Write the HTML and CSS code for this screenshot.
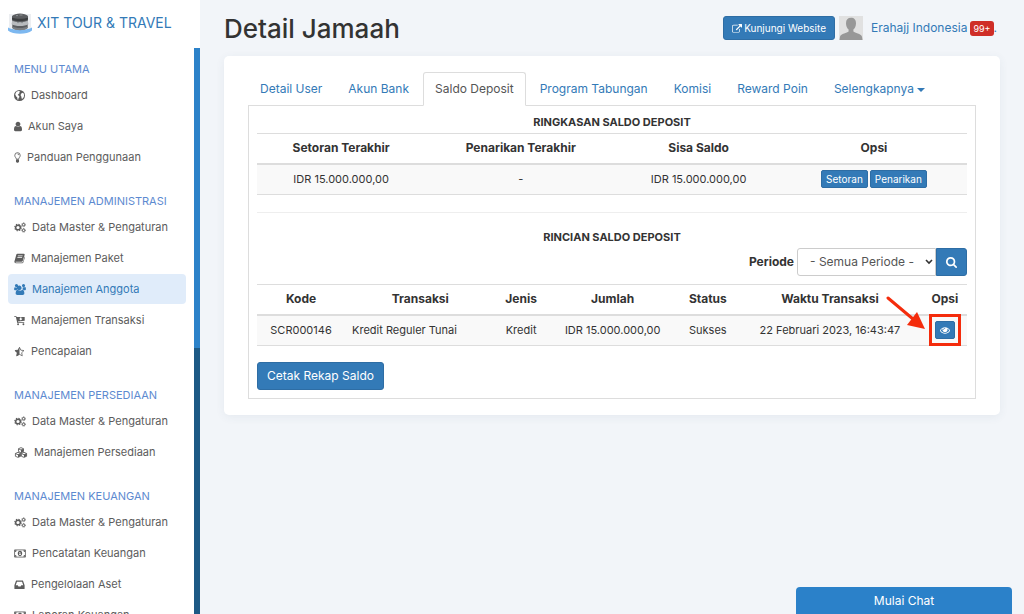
FILE: index.html
```html
<!DOCTYPE html>
<html lang="id">
<head>
<meta charset="utf-8">
<meta name="viewport" content="width=device-width, initial-scale=1">
<title>Detail Jamaah</title>
<link rel="stylesheet" href="styles.css">
</head>
<body>
<svg class="defs" aria-hidden="true">
  <symbol id="globe" viewBox="1 1 12 12"><path fill-rule="evenodd" d="M7 1a6 6 0 1 0 0 12A6 6 0 0 0 7 1zM3.600 3 5.800 2.200 7.600 2.400 6.700 3.700 7.200 4.400 5.900 5.300 5 6.500 6.400 7.200 7 8.500 6 9.800 5.600 11.600 4.800 11.300 4.600 9.200 3.200 7.800 2.300 5.600zM9.600 4.300l1.500-.3.900 2.200-.3 2.300-1.500 2-.9-.3-.2-1.900-.9-1.500.4-1.500z"/></symbol>
  <symbol id="user" viewBox="256 128 1280 1536"><path d="M1536 1399q0 109-62.500 187t-150.500 78h-854q-88 0-150.500-78t-62.500-187q0-85 8.500-160.500t31.500-152 58.500-131 94-89 134.500-34.500q131 128 313 128t313-128q76 0 134.500 34.500t94 89 58.500 131 31.500 152 8.500 160.500zm-256-887q0 159-112.500 271.500t-271.500 112.500-271.500-112.500-112.500-271.500 112.500-271.500 271.500-112.500 271.500 112.500 112.500 271.500z"/></symbol>
  <symbol id="bulb" viewBox="0 0 8 13"><path fill="none" stroke="currentColor" d="M2.700 8.500C2.500 6.800.8 6 .8 4a3.200 3.200 0 0 1 6.400 0c0 2-1.700 2.800-1.900 4.500zM4 2.300c1 0 1.600.6 1.600 1.400"/><path d="M2.200 9h3.600v2.600l-1.100 1H3.300l-1.100-1z"/></symbol>
  <symbol id="cogs" viewBox="0 0 15 13"><circle cx="5" cy="6.500" r="2.900" fill="none" stroke="currentColor" stroke-width="1.800"/><circle cx="5" cy="6.500" r="4.100" fill="none" stroke="currentColor" stroke-width="1.300" stroke-dasharray="1.700 1.520"/><g fill="none" stroke="currentColor"><circle cx="12" cy="3" r="1.500" stroke-width="1.200"/><circle cx="12" cy="3" r="2.300" stroke-dasharray="1.100 .706"/><circle cx="12" cy="10" r="1.500" stroke-width="1.200"/><circle cx="12" cy="10" r="2.300" stroke-dasharray="1.100 .706"/></g></symbol>
  <symbol id="book" viewBox="0 1 14 12"><path fill-rule="evenodd" d="M4.300 1h8.200c.9 0 1.300.6 1 1.400l-2.400 7.800c-.2.700-.7 1-1.400 1H2.600c-.9 0-.9.700-.2.800h7.900c.7 0 1-.2 1.200-.8l2-6.700c.4.400.5.800.3 1.300L12 11.900c-.3.700-.8 1.100-1.500 1.100H2.400C1 13 .2 11.800.6 10.600L3 2c.2-.600.600-1 1.300-1zm.7 2.200-.2.800h6l.2-.8zm-.6 2-.2.800h6l.2-.8z"/></symbol>
  <symbol id="users" viewBox="64 0 1920 1792"><path d="M657 896q-162 5-265 128h-134q-82 0-138-40.500t-56-118.500q0-353 124-353 6 0 43.500 21t97.500 42.500 119 21.500q67 0 133-23-5 37-5 66 0 159 90 294zm1071 637q0 120-73 189.500t-194 69.500h-874q-121 0-194-69.500t-73-189.500q0-53 3.500-103.500t14-109 26.500-108.500 43-97.500 62-81 85.500-53.500 111.500-20q10 0 43 21.500t73 48 107 48 135 21.500 135-21.500 107-48 73-48 43-21.500q61 0 111.500 20t85.500 53.500 62 81 43 97.500 26.500 108.500 14 109 3.500 103.500zm-1024-1277q0 106-75 181t-181 75-181-75-75-181 75-181 181-75 181 75 75 181zm576 384q0 159-112.500 271.500t-271.500 112.500-271.500-112.500-112.500-271.500 112.500-271.500 271.500-112.500 271.500 112.500 112.500 271.500zm704 225q0 78-56 118.500t-138 40.500h-134q-103-123-265-128 90-135 90-294 0-29-5-66 66 23 133 23 59 0 119-21.500t97.500-42.500 43.500-21q124 0 124 353zm-128-609q0 106-75 181t-181 75-181-75-75-181 75-181 181-75 181 75 75 181z"/></symbol>
  <symbol id="cart" viewBox="0 1 14 12"><path fill-rule="evenodd" d="M.3 1.300h2.500l.5 1.200h10.300v4.700L5 8.300l.2.900H13v1H4.200L2.300 2.300h-2zM7.700 3.300v1.400H6.300L8.600 7l2.300-2.300H9.500V3.300z"/><circle cx="5.200" cy="11.700" r="1.200"/><circle cx="12" cy="11.700" r="1.200"/></symbol>
  <symbol id="star" viewBox="0 0 14 13"><path fill="none" stroke="currentColor" stroke-linejoin="round" d="M7 1.200 8.700 4.800l4 .5L9.800 8l.7 4L7 10.100 3.500 12l.7-4-2.900-2.700 4-.5z"/><path d="M7 .7v9.600L3.100 12.500l.8-4.300L.7 5.100l4.400-.6z"/></symbol>
  <symbol id="cubes" viewBox="0 0 16 14"><g fill="none" stroke="currentColor" stroke-width="1.100" stroke-linejoin="round"><path d="M8 .8l3.200 1.400v3.500L8 7.200 4.800 5.700V2.200zM4.800 2.400 8 3.800l3.200-1.400M4.200 6.800l3.300 1.400v3.600l-3.300 1.400L.9 11.800V8.200zM.9 8.300l3.300 1.500 3.300-1.500M11.800 6.800l3.300 1.400v3.600l-3.300 1.400-3.300-1.400V8.200zM8.500 8.300l3.300 1.500 3.300-1.500"/></g><path d="M8 3.900l3.200-1.500v3.300L8 7.200zM4.200 9.900l3.300-1.500v3.400l-3.300 1.400zM11.800 9.900l3.300-1.500v3.400l-3.300 1.400z"/></symbol>
  <symbol id="money" viewBox="0 0 15 12"><path fill="none" stroke="currentColor" d="M.7 1.500h13.600v9H.7z"/><path fill-rule="evenodd" d="M7.500 2.700C3.800 2.700 3.800 9.300 7.500 9.300s3.700-6.600 0-6.600zM7 4.300h1v2.700h.7v.9H6.300V7H7V5.400h-.6v-.6z"/><path d="M1 2h2.300A2 2 0 0 1 1 4zM14 2v2a2 2 0 0 1-2.300-2zM1 10V8a2 2 0 0 1 2.300 2zM14 10h-2.300A2 2 0 0 1 14 8z"/></symbol>
  <symbol id="inbox" viewBox="0 0 14 12"><path fill-rule="evenodd" d="M3.300 1h7.400c.4 0 .7.200.9.600L13.500 7v4c0 .5-.3.800-.8.800H1.300c-.5 0-.8-.3-.8-.8V7l1.900-5.400c.2-.4.500-.6.900-.6zm.5 1.500L2.200 7h2.600l.8 1.600h2.800L9.200 7h2.600l-1.600-4.500z"/></symbol>
  <symbol id="external" viewBox="0 0 1792 1600"><path d="M1408 928v320q0 119-84.500 203.500t-203.500 84.500h-832q-119 0-203.500-84.500t-84.500-203.500v-832q0-119 84.500-203.500t203.500-84.500h704q14 0 23 9t9 23v64q0 14-9 23t-23 9h-704q-66 0-113 47t-47 113v832q0 66 47 113t113 47h832q66 0 113-47t47-113v-320q0-14 9-23t23-9h64q14 0 23 9t9 23zm384-864v512q0 26-19 45t-45 19-45-19l-176-176-652 652q-10 10-23 10t-23-10l-114-114q-10-10-10-23t10-23l652-652-176-176q-19-19-19-45t19-45 45-19h512q26 0 45 19t19 45z"/></symbol>
  <symbol id="search" viewBox="64 128 1664 1664"><path d="M1216 832q0-185-131.500-316.500t-316.500-131.500-316.500 131.500-131.500 316.500 131.500 316.500 316.500 131.500 316.500-131.500 131.500-316.500zm512 832q0 52-38 90t-90 38q-54 0-90-38l-343-342q-179 124-399 124-143 0-273.500-55.500t-225-150-150-225-55.500-273.500 55.500-273.500 150-225 225-150 273.500-55.500 273.500 55.500 225 150 150 225 55.500 273.500q0 220-124 399l343 343q37 37 37 90z"/></symbol>
  <symbol id="eye" viewBox="0 384 1792 1152"><path d="M1664 960q-152-236-381-353 61 104 61 225 0 185-131.500 316.500t-316.500 131.500-316.500-131.500-131.500-316.500q0-121 61-225-229 117-381 353 133 205 333.500 326.500t434.500 121.500 434.500-121.500 333.500-326.500zm-720-384q0-20-14-34t-34-14q-125 0-214.500 89.500t-89.500 214.500q0 20 14 34t34 14 34-14 14-34q0-86 61-147t147-61q20 0 34-14t14-34zm848 384q0 34-20 69-140 230-376.500 368.500t-499.500 138.500-499.500-139-376.500-368q-20-35-20-69t20-69q140-229 376.500-368t499.500-139 499.500 139 376.500 368q20 35 20 69z"/></symbol>
</svg>
<div class="app">
  <aside class="sidebar">
    <a class="brand" href="#">
      <svg class="logo" viewBox="0 0 24 22" aria-hidden="true">
        <path d="M1 2h22v14H1z" fill="#eceef1"/>
        <path d="M0 15.500c1 .5 2 1 3.500 1.300 5 1.400 12 1.400 17 0 1.500-.3 2.500-.8 3.500-1.300v3c-5 4.400-19 4.400-24 0z" fill="#7db8f0"/>
        <path d="M4 4C7 .6 17 .6 20 4l-.4 12c-2 2.600-13.200 2.600-15.200 0z" fill="#5c5e61"/>
        <path d="M4 5.500c3.500 1.800 12.500 1.800 16 0v2c-3.500 2-12.500 2-16 0z" fill="#3c3e40"/>
        <path d="M4.200 8.800c3.500 1.800 12.100 1.800 15.600 0l.7 3.400c-4 2.400-13 2.400-17 0z" fill="#b8bbbe"/>
        <path d="M8 3.600h2M11.500 3h3M9 10.600h2M13 10.600h2" stroke="#8f9295"/>
        <path d="M4 14.200c4 2.400 12 2.400 16 0l-.6 2.300c-3.500 2.200-11.300 2.200-14.800 0z" fill="#7c7f82"/>
      </svg>
      <span>XIT TOUR &amp; TRAVEL</span>
    </a>
    <div class="menu-area">
      <nav class="menu">
        <section class="group">
          <h2>MENU UTAMA</h2>
          <a href="#"><svg class="i13"><use href="#globe"/></svg>Dashboard</a>
          <a href="#"><svg class="i11"><use href="#user"/></svg>Akun Saya</a>
          <a href="#"><svg class="i9"><use href="#bulb"/></svg>Panduan Penggunaan</a>
        </section>
        <section class="group">
          <h2>MANAJEMEN ADMINISTRASI</h2>
          <a href="#"><svg class="i15"><use href="#cogs"/></svg>Data Master &amp; Pengaturan</a>
          <a href="#"><svg class="i13"><use href="#book"/></svg>Manajemen Paket</a>
          <a href="#" class="active" aria-current="page"><svg class="i15"><use href="#users"/></svg>Manajemen Anggota</a>
          <a href="#"><svg class="i13"><use href="#cart"/></svg>Manajemen Transaksi</a>
          <a href="#"><svg class="i13"><use href="#star"/></svg>Pencapaian</a>
        </section>
        <section class="group">
          <h2>MANAJEMEN PERSEDIAAN</h2>
          <a href="#"><svg class="i15"><use href="#cogs"/></svg>Data Master &amp; Pengaturan</a>
          <a href="#"><svg class="i17"><use href="#cubes"/></svg>Manajemen Persediaan</a>
        </section>
        <section class="group">
          <h2>MANAJEMEN KEUANGAN</h2>
          <a href="#"><svg class="i15"><use href="#cogs"/></svg>Data Master &amp; Pengaturan</a>
          <a href="#"><svg class="i15"><use href="#money"/></svg>Pencatatan Keuangan</a>
          <a href="#"><svg class="i13"><use href="#inbox"/></svg>Pengelolaan Aset</a>
          <a href="#"><svg class="i15"><use href="#money"/></svg>Laporan Keuangan</a>
        </section>
      </nav>
      <div class="track"><div class="thumb"></div></div>
    </div>
  </aside>

  <main class="main">
    <header class="topbar">
      <h1>Detail Jamaah</h1>
      <a class="btn visit" href="#"><svg><use href="#external"/></svg>Kunjungi Website</a>
      <svg class="avatar" viewBox="0 0 24 24" role="img" aria-label="Foto profil">
        <path fill="#e1e1e1" d="M0 0h24v24H0z"/>
        <path fill="#989898" d="M12 1.800c3.200 0 5 2 5 5.400 0 3-1.100 5.200-2.600 6.300v2c1.500 1.800 7.600 1.700 8.600 5.300l.5 3.200H.5l.5-3.200c1-3.600 7.100-3.500 8.600-5.300v-2C8.100 12.400 7 10.200 7 7.200c0-3.400 1.800-5.400 5-5.400z"/>
      </svg>
      <div class="account"><a href="#">Erahajj Indonesia</a><span class="badge">99+</span><a href="#">.</a></div>
    </header>

    <div class="card">
      <nav class="tabs">
        <a href="#">Detail User</a>
        <a href="#">Akun Bank</a>
        <a href="#" class="current" aria-current="page">Saldo Deposit</a>
        <a href="#">Program Tabungan</a>
        <a href="#">Komisi</a>
        <a href="#">Reward Poin</a>
        <a href="#">Selengkapnya<span class="caret"></span></a>
      </nav>
      <div class="panel">
        <h3>RINGKASAN SALDO DEPOSIT</h3>
        <table class="summary">
          <colgroup><col class="s1"><col class="s2"><col class="s3"><col class="s4"></colgroup>
          <thead><tr><th>Setoran Terakhir</th><th>Penarikan Terakhir</th><th>Sisa Saldo</th><th>Opsi</th></tr></thead>
          <tbody><tr><td>IDR 15.000.000,00</td><td>-</td><td>IDR 15.000.000,00</td>
            <td><div class="actions"><button class="btn small">Setoran</button><button class="btn small">Penarikan</button></div></td></tr></tbody>
        </table>
        <hr>
        <h3>RINCIAN SALDO DEPOSIT</h3>
        <form class="filter">
          <label for="periode">Periode</label>
          <div class="select-wrap">
            <select id="periode"><option>- Semua Periode -</option></select>
            <svg class="chevron" viewBox="0 0 8 6" aria-hidden="true"><path d="M1 1l3 3 3-3" fill="none" stroke="#333" stroke-width="1.600"/></svg>
          </div>
          <button class="btn find" type="button" aria-label="Cari"><svg><use href="#search"/></svg></button>
        </form>
        <table class="detail">
          <colgroup><col class="d1"><col class="d2"><col class="d3"><col class="d4"><col class="d5"><col class="d6"><col class="d7"></colgroup>
          <thead><tr><th>Kode</th><th>Transaksi</th><th>Jenis</th><th>Jumlah</th><th>Status</th><th>Waktu Transaksi</th><th>Opsi</th></tr></thead>
          <tbody><tr><td>SCR000146</td><td class="name">Kredit Reguler Tunai</td><td>Kredit</td><td>IDR 15.000.000,00</td><td>Sukses</td><td>22 Februari 2023, 16:43:47</td>
            <td><div class="marked"><button class="btn view" aria-label="Lihat"><svg><use href="#eye"/></svg></button>
              <span class="frame"></span>
              <svg class="arrow" viewBox="0 0 40 36" aria-hidden="true"><path d="M2 3 27 24" stroke="#f42c0c" stroke-width="3" stroke-linecap="round"/><path d="M31 17 39 34 21 30z" fill="#f42c0c"/></svg></div></td></tr></tbody>
        </table>
        <button class="btn print">Cetak Rekap Saldo</button>
      </div>
    </div>
  </main>
</div>
<button class="chat">Mulai Chat</button>
</body>
</html>
```
FILE: styles.css
```css
* { box-sizing: border-box; }
body { margin: 0; background: #f2f5f9; color: #333; font: 11px/16px Inter, "Open Sans", sans-serif; }
a { color: #337ab7; text-decoration: none; }
button, select { font: inherit; }
svg { fill: currentColor; flex: none; }
h1, h2, h3 { margin: 0; }
.defs { position: absolute; width: 0; height: 0; }

.app { display: grid; grid-template-columns: 200px minmax(0, 1fr); height: 100vh; }

.sidebar { display: flex; flex-direction: column; height: 100vh; background: #fff; overflow: hidden; }
.brand { display: flex; align-items: center; gap: 5px; height: 48px; padding: 0 8px 2px; font-size: 14px; flex: none; }
.logo { width: 24px; height: 22px; }
.menu-area { display: flex; flex: 1; min-height: 0; }
.menu { flex: 1; padding: 10px 8px 0; overflow: hidden; white-space: nowrap; }
.track { width: 6px; background: #1d5985; }
.thumb { height: 53%; background: #2c82c9; }
.group { margin-bottom: 18px; }
.group h2 { padding-left: 6px; color: #5d8ad0; font-size: 11px; font-weight: 400; line-height: 22px; }
.group a { display: flex; align-items: center; gap: 6px; height: 30px; margin-bottom: 1px; padding: 0 6px; border-radius: 4px; color: #5c5c5c; }
.group a.active { background: #e0ecfa; color: #337ab7; }
.group svg { height: 11px; }
.group .i9 { width: 7px; }
.group .i11 { width: 8px; }
.group .i13 { width: 11px; }
.group .i15 { width: 12px; }
.group .i17 { width: 14px; }

.main { padding: 0 24px 24px; overflow: hidden; }
.topbar { display: flex; align-items: center; height: 56px; gap: 4px; padding-right: 3px; }
.topbar h1 { flex: 1; padding-top: 2px; font-size: 26px; font-weight: 500; line-height: 32px; }
.btn { display: inline-flex; align-items: center; justify-content: center; border: 1px solid #2e6da4; border-radius: 3px; background: #337ab7; color: #fff; padding: 0; }
.visit { height: 24px; gap: 2px; padding: 0 8px; font-size: 10px; }
.visit svg { width: 10px; height: 9px; }
.avatar { width: 24px; height: 24px; margin-right: 4px; }
.account { display: flex; align-items: center; font-size: 12px; }
.badge { margin-left: 3px; padding: 0 3px; border-radius: 3px; background: #cf2e27; color: #fff; font-size: 9px; line-height: 15px; }

.card { padding: 16px 24px; border-radius: 5px; background: #fff; box-shadow: 0 2px 10px rgba(60, 90, 120, .07); }
.tabs { display: flex; gap: 2px; font-size: 12px; white-space: nowrap; }
.tabs a { height: 34px; padding: 0 11px; border: 1px solid transparent; border-radius: 3px 3px 0 0; line-height: 32px; }
.tabs .current { position: relative; border-color: #ddd #ddd #fff; background: #fff; color: #555; }
.caret { display: inline-block; margin-left: 3px; border: 4px solid transparent; border-top-color: currentColor; border-bottom: 0; vertical-align: middle; }
.panel { margin-top: -1px; padding: 8px; border: 1px solid #ddd; }
h3 { font-size: 11px; font-weight: 700; line-height: 16px; text-align: center; }

table { width: 100%; table-layout: fixed; border-collapse: collapse; }
th, td { padding: 0; text-align: center; white-space: nowrap; }
th { height: 30px; border-top: 1px solid #ddd; border-bottom: 2px solid #ddd; font-size: 12px; font-weight: 700; }
td { height: 31px; border-bottom: 1px solid #ddd; background: #f9f9f9; }
td.name { padding-left: 7px; text-align: left; }
.summary { margin-top: 3px; }
.s1 { width: 23.7%; }
.s2 { width: 26.9%; }
.s3 { width: 23.2%; }
.s4 { width: 26.2%; }
.d1 { width: 12.4%; }
.d2 { width: 21.2%; }
.d3 { width: 7.2%; }
.d4 { width: 18.6%; }
.d5 { width: 8.2%; }
.d6 { width: 26.2%; }
.d7 { width: 6.2%; }
.actions { display: flex; justify-content: center; gap: 2px; }
.small { height: 18px; padding: 0 4px; border-radius: 2px; font-size: 10px; line-height: 16px; }
hr { margin: 17px 0 16px; border: 0; border-top: 1px solid #eee; }

.filter { display: flex; align-items: center; justify-content: flex-end; margin: 3px 0 8px; }
.filter label { margin-right: 3px; font-size: 12px; font-weight: 700; }
.select-wrap { position: relative; width: 139px; }
.select-wrap select { display: block; width: 100%; height: 28px; padding: 0 12px; border: 1px solid #ccc; border-radius: 3px 0 0 3px; background: #fff; color: #555; font-size: 12px; appearance: none; }
.chevron { position: absolute; right: 3px; top: 11px; width: 8px; height: 6px; pointer-events: none; }
.find { width: 31px; height: 28px; border-radius: 0 3px 3px 0; }
.find svg { width: 11px; height: 11px; }

.marked { position: relative; display: flex; justify-content: center; width: 20px; margin: 0 auto; }
.view { width: 20px; height: 18px; border-radius: 2px; }
.view svg { width: 10px; height: 7px; }
.frame { position: absolute; inset: -7px -6px; border: 3px solid #f42c0c; pointer-events: none; }
.arrow { position: absolute; right: 29px; bottom: 8px; width: 40px; height: 36px; pointer-events: none; }
.print { height: 28px; margin-top: 16px; padding: 0 9px; font-size: 12px; vertical-align: top; }

.chat { position: fixed; right: 12px; bottom: 0; width: 216px; height: 27px; border: 0; border-radius: 4px 4px 0 0; background: #2b81c9; color: #fff; font-size: 12px; }
```
